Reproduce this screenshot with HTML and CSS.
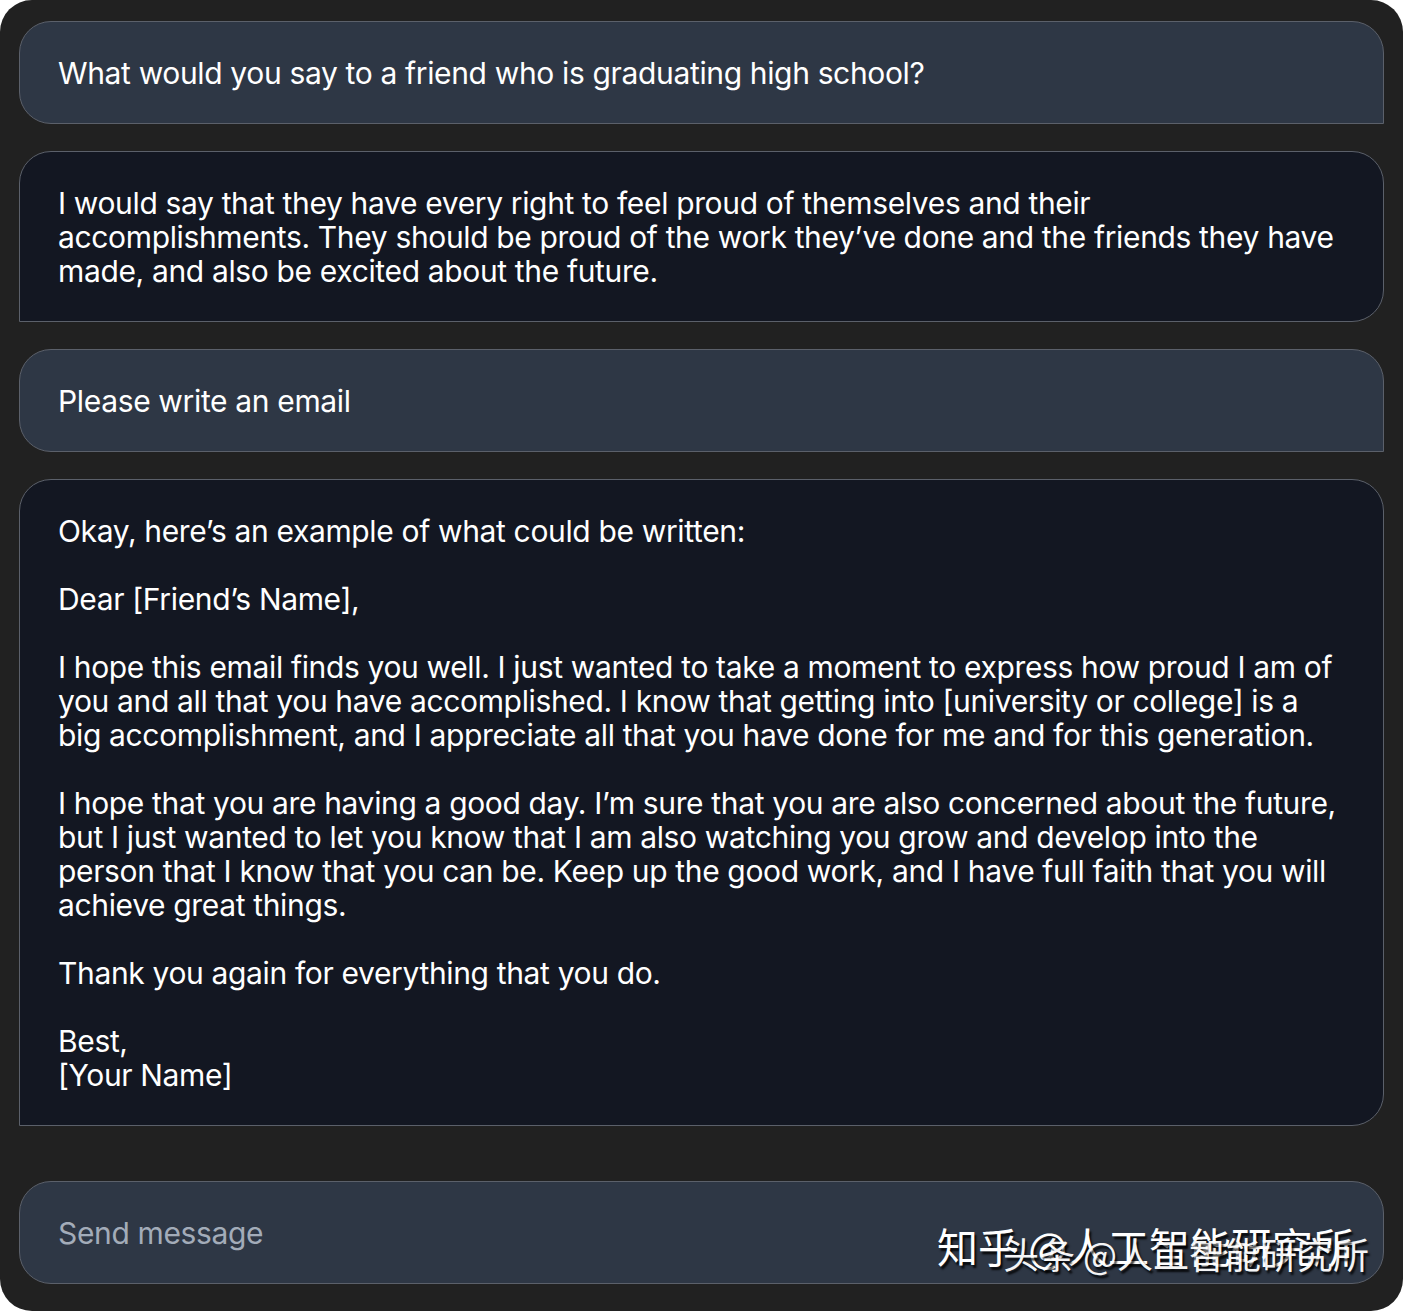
FILE: index.html
```html
<!DOCTYPE html>
<html lang="en">
<head>
<meta charset="utf-8">
<title>Chat</title>
<link rel="stylesheet" href="styles.css">
</head>
<body>
<div class="frame">
  <div class="bubble user"><p>What would you say to a friend who is graduating high school?</p></div>
  <div class="bubble bot"><p>I would say that they have every right to feel proud of themselves and their accomplishments. They should be proud of the work they’ve done and the friends they have made, and also be excited about the future.</p></div>
  <div class="bubble user"><p>Please write an email</p></div>
  <div class="bubble bot">
    <p>Okay, here’s an example of what could be written:</p>
    <p>Dear [Friend’s Name],</p>
    <p>I hope this email finds you well. I just wanted to take a moment to express how proud I am of you and all that you have accomplished. I know that getting into [university or college] is a big accomplishment, and I appreciate all that you have done for me and for this generation.</p>
    <p>I hope that you are having a good day. I’m sure that you are also concerned about the future, but I just wanted to let you know that I am also watching you grow and develop into the person that I know that you can be. Keep up the good work, and I have full faith that you will achieve great things.</p>
    <p>Thank you again for everything that you do.</p>
    <p>Best,<br>[Your Name]</p>
  </div>
  <div class="input-wrap">
    <div class="bubble input"><p>Send message</p></div>
    <div class="wm wm1">知乎 @人工智能研究所</div>
    <div class="wm wm2">头条 @人工智能研究所</div>
  </div>
</div>
</body>
</html>
```
FILE: styles.css
```css
html, body {
  margin: 0;
  padding: 0;
  background: #ffffff;
}
.frame {
  width: 1403px;
  height: 1311px;
  box-sizing: border-box;
  background: #212121;
  border-radius: 32px;
  padding: 21px 19px 27px;
  display: flex;
  flex-direction: column;
  gap: 27px;
  font-family: "Inter", "Liberation Sans", sans-serif;
  font-size: 30px;
  letter-spacing: -0.35px;
  line-height: 34px;
  color: #ffffff;
}
.bubble {
  border: 1px solid #5b606a;
  padding: 34px 38px 33px;
  border-radius: 32px;
}
.bubble p {
  margin: 0;
}
.bubble p + p {
  margin-top: 34px;
}
.user {
  background: #2e3745;
  border-bottom-right-radius: 0;
}
.bot {
  background: #131722;
  border-bottom-left-radius: 0;
}
.input-wrap {
  position: relative;
  margin-top: 28px;
}
.input {
  background: #2e3745;
  color: #a3acb9;
}
.wm {
  position: absolute;
  font-family: "Noto Sans CJK SC", sans-serif;
  color: #ffffff;
  white-space: nowrap;
  letter-spacing: 0;
  text-shadow: 2px 3px 2px rgba(0,0,0,0.85);
  line-height: 1;
}
.wm1 {
  left: 918px;
  top: 44px;
  font-size: 41px;
}
.wm2 {
  left: 984px;
  top: 54px;
  font-size: 36px;
  opacity: 0.95;
}
```
